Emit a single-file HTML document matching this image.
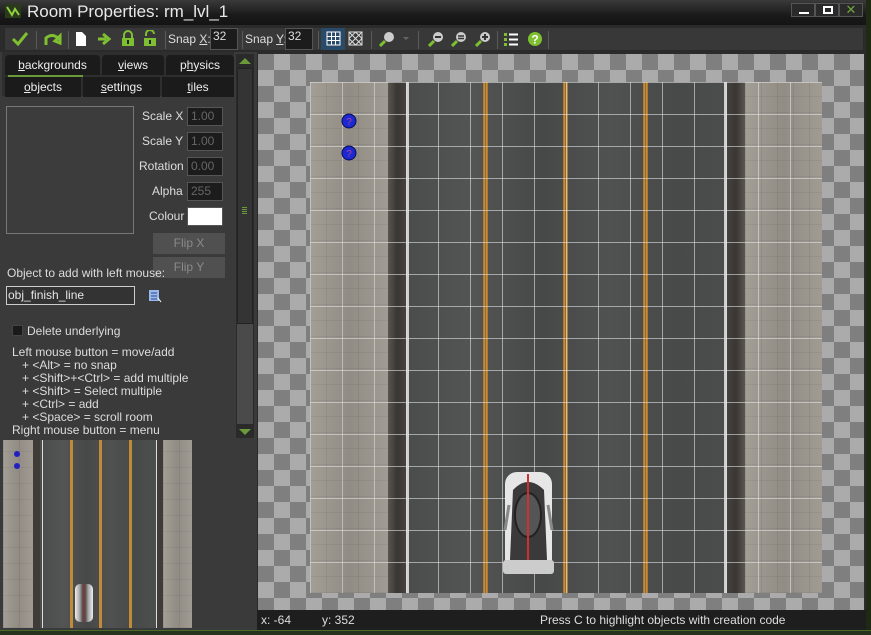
<!DOCTYPE html>
<html><head><meta charset="utf-8"><style>
*{margin:0;padding:0;box-sizing:border-box}
body{width:871px;height:635px;overflow:hidden;background:#2b2b2b;font-family:"Liberation Sans",sans-serif;color:#e6e6e6;position:relative}
.a{position:absolute}
.title{left:0;top:0;width:871px;height:25px;background:linear-gradient(#3a3a3a,#1a1a1a 60%,#141414)}
.tb{left:4px;top:27px;width:860px;height:24px;background:#383838;border:1px solid #2a2a2a}
.sep{position:absolute;top:3px;width:1px;height:18px;background:#5a5a5a}
.inp{position:absolute;background:#1c1c1c;border:1px solid #555;color:#ddd;font-size:12px;padding-left:2px}
.lbl{position:absolute;font-size:12px;color:#ddd}
.tab{position:absolute;background:#1b1b1b;font-size:12px;color:#eee;text-align:center;border-radius:4px 4px 0 0;line-height:20px}
.f{font-size:12px;color:#ddd;position:absolute}
.gi{position:absolute;background:#1c1c1c;border:1px solid #555;color:#666;font-size:12px;padding-left:3px;line-height:17px;width:36px;height:19px}
.btn{position:absolute;background:#505050;color:#8a8a8a;font-size:12px;text-align:center;line-height:21px;width:72px;height:21px}
.chk{background-color:#7f7f7f;background-image:linear-gradient(45deg,#ababab 25%,transparent 25%,transparent 75%,#ababab 75%),linear-gradient(45deg,#ababab 25%,transparent 25%,transparent 75%,#ababab 75%);background-size:32px 32px;background-position:0 0,16px 16px}
.sw{background:#9b968e;background-image:repeating-linear-gradient(90deg,rgba(0,0,0,.07) 0 1px,transparent 1px 16px),repeating-linear-gradient(0deg,rgba(0,0,0,.05) 0 1px,transparent 1px 16px),linear-gradient(90deg,#a39e96,#918c84,#a09b93)}
.road{background:linear-gradient(90deg,#4b4c4c,#535454 20%,#474848 40%,#505151 60%,#484949 80%,#4d4e4e)}
.grid{background-image:linear-gradient(90deg,rgba(225,225,225,.6) 1px,transparent 1px),linear-gradient(0deg,transparent 31px,rgba(225,225,225,.6) 31px);background-size:32px 32px}
.yl{position:absolute;top:0;bottom:0;width:5px;background:linear-gradient(90deg,#9a6a2a,#d89a3c 30%,#7a5a30 50%,#d89a3c 70%,#9a6a2a)}
</style></head><body>
<div class="a title"></div>
<svg class="a" style="left:5px;top:4px" width="16" height="14"><rect width="16" height="14" fill="#2c3a1c"/><path d="M2 3 L7 11 L10 5 L14 11" stroke="#8fd040" stroke-width="2" fill="none"/></svg>
<div class="a" style="left:27px;top:2px;font-size:17px;color:#e8e8e8">Room Properties: rm_lvl_1</div>
<div class="a" style="left:791px;top:3px;width:24px;height:14px;background:#2a2a2a;border:1px solid #555"><div class="a" style="left:7px;top:8px;width:10px;height:2px;background:#fff"></div></div>
<div class="a" style="left:815px;top:3px;width:24px;height:14px;background:#2a2a2a;border:1px solid #555"><div class="a" style="left:7px;top:2px;width:10px;height:8px;border:2px solid #fff"></div></div>
<div class="a" style="left:839px;top:3px;width:24px;height:14px;background:#2a2a2a;border:1px solid #555;color:#6ea83a;font-size:13px;text-align:center;line-height:12px">✕</div>
<div class="a" style="left:866px;top:0;width:5px;height:635px;background:#1e2a14"></div>

<div class="a tb">
<svg class="a" style="left:6px;top:3px" width="18" height="16"><path d="M2 8 L7 13 L16 2" stroke="#7fc030" stroke-width="3" fill="none"/></svg>
<div class="sep" style="left:31px"></div>
<svg class="a" style="left:37px;top:3px" width="20" height="16"><path d="M4 14 L4 7 Q10 2 16 7 L13 10 L18 12 L18 5 L16 7" stroke="#7fc030" stroke-width="3" fill="none"/></svg>
<div class="sep" style="left:63px"></div>
<svg class="a" style="left:70px;top:3px" width="12" height="16"><path d="M1 1 H7 L11 5 V15 H1Z" fill="#fff"/></svg>
<svg class="a" style="left:92px;top:5px" width="16" height="12"><path d="M1 6 H9 M6 1 L12 6 L6 11" stroke="#7fc030" stroke-width="3" fill="none"/></svg>
<svg class="a" style="left:116px;top:2px" width="14" height="17"><path d="M3 8 V5 A4 4 0 0 1 11 5 V8" stroke="#7fc030" stroke-width="2" fill="none"/><rect x="1" y="8" width="12" height="8" fill="#7fc030"/><rect x="6" y="10" width="2" height="4" fill="#223"/></svg>
<svg class="a" style="left:138px;top:2px" width="14" height="17"><path d="M3 6 V4 A4 4 0 0 1 11 4" stroke="#7fc030" stroke-width="2" fill="none"/><rect x="1" y="8" width="12" height="8" fill="#7fc030"/><rect x="6" y="10" width="2" height="4" fill="#223"/></svg>
<div class="sep" style="left:160px"></div>
<div class="lbl" style="left:163px;top:4px">Snap <u>X</u>:</div>
<div class="inp" style="left:205px;top:0;width:28px;height:22px">32</div>
<div class="sep" style="left:237px"></div>
<div class="lbl" style="left:240px;top:4px">Snap <u>Y</u>:</div>
<div class="inp" style="left:280px;top:0;width:28px;height:22px">32</div>
<div class="sep" style="left:313px"></div>
<div class="a" style="left:316px;top:0;width:24px;height:22px;background:#2a4a6a"></div>
<svg class="a" style="left:321px;top:3px" width="15" height="15"><path d="M1 1H14V14H1Z M5.5 1V14 M9.5 1V14 M1 5.5H14 M1 9.5H14" stroke="#fff" fill="none"/></svg>
<svg class="a" style="left:343px;top:3px" width="15" height="15"><path d="M1 1H14V14H1Z M1 1L14 14 M14 1L1 14 M1 7.5L7.5 1L14 7.5L7.5 14Z" stroke="#ddd" fill="none"/></svg>
<div class="sep" style="left:366px"></div>
<svg class="a" style="left:374px;top:3px" width="16" height="16"><circle cx="10" cy="6" r="5" fill="#ccc"/><path d="M6 10 L1 15" stroke="#7fc030" stroke-width="3"/></svg>
<div class="a" style="left:398px;top:9px;border:3px solid transparent;border-top-color:#666"></div>
<div class="sep" style="left:413px"></div>
<svg class="a" style="left:423px;top:3px" width="16" height="16"><circle cx="10" cy="6" r="5" fill="#ccc"/><path d="M7 6H13" stroke="#333" stroke-width="2"/><path d="M6 10 L1 15" stroke="#7fc030" stroke-width="3"/></svg>
<svg class="a" style="left:446px;top:3px" width="16" height="16"><circle cx="10" cy="6" r="5" fill="#ccc"/><path d="M7 5H13M7 7.5H13" stroke="#333" stroke-width="1.5"/><path d="M6 10 L1 15" stroke="#7fc030" stroke-width="3"/></svg>
<svg class="a" style="left:470px;top:3px" width="16" height="16"><circle cx="10" cy="6" r="5" fill="#ccc"/><path d="M7 6H13M10 3V9" stroke="#333" stroke-width="2"/><path d="M6 10 L1 15" stroke="#7fc030" stroke-width="3"/></svg>
<div class="sep" style="left:492px"></div>
<svg class="a" style="left:498px;top:3px" width="16" height="16"><rect x="1" y="2" width="3" height="3" fill="#7fc030"/><rect x="1" y="7" width="3" height="3" fill="#7fc030"/><rect x="1" y="12" width="3" height="3" fill="#7fc030"/><path d="M6 3.5H15M6 8.5H15M6 13.5H15" stroke="#fff" stroke-width="2"/></svg>
<svg class="a" style="left:522px;top:3px" width="16" height="16"><circle cx="8" cy="8" r="7" fill="#7fc030"/><text x="8" y="12.5" font-size="12" font-weight="bold" fill="#fff" text-anchor="middle" font-family="Liberation Sans">?</text></svg>
<div class="sep" style="left:543px"></div>
</div>

<!-- left panel -->
<div class="a" style="left:0;top:52px;width:257px;height:578px;background:#3a3a3a"></div>
<div class="a" style="left:2px;top:52px;width:232px;height:44px;background:#2e2e2e"></div>
<div class="tab" style="left:5px;top:55px;width:95px"><u>b</u>ackgrounds</div>
<div class="tab" style="left:102px;top:55px;width:62px"><u>v</u>iews</div>
<div class="tab" style="left:166px;top:55px;width:68px">p<u>h</u>ysics</div>
<div class="a" style="left:8px;top:75px;width:75px;height:2px;background:#6a9a3a"></div>
<div class="tab" style="left:5px;top:77px;width:76px;border-radius:0"><u>o</u>bjects</div>
<div class="tab" style="left:83px;top:77px;width:77px;border-radius:0"><u>s</u>ettings</div>
<div class="tab" style="left:162px;top:77px;width:72px;border-radius:0"><u>t</u>iles</div>

<div class="a" style="left:6px;top:106px;width:128px;height:128px;border:1px solid #777;background:#3c3c3c"></div>
<div class="f" style="left:142px;top:109px">Scale X</div><div class="gi" style="left:187px;top:107px">1.00</div>
<div class="f" style="left:142px;top:134px">Scale Y</div><div class="gi" style="left:187px;top:132px">1.00</div>
<div class="f" style="left:139px;top:159px">Rotation</div><div class="gi" style="left:187px;top:157px">0.00</div>
<div class="f" style="left:152px;top:184px">Alpha</div><div class="gi" style="left:187px;top:182px">255</div>
<div class="f" style="left:149px;top:209px">Colour</div><div class="a" style="left:187px;top:207px;width:36px;height:19px;background:#fff;border:1px solid #555"></div>
<div class="btn" style="left:153px;top:233px">Flip X</div>
<div class="btn" style="left:153px;top:257px">Flip Y</div>
<div class="f" style="left:7px;top:266px">Object to add with left mouse:</div>
<div class="a" style="left:6px;top:286px;width:129px;height:19px;border:1px solid #ccc;background:#333;font-size:12px;line-height:17px;padding-left:1px">obj_finish_line</div>
<svg class="a" style="left:148px;top:289px" width="14" height="14"><rect x="1" y="1" width="10" height="11" fill="#9ab8e8"/><path d="M3 4H9M3 7H9M3 10H9" stroke="#2a4a9a"/><path d="M10 9L13 13" stroke="#fff"/></svg>
<div class="a" style="left:12px;top:325px;width:11px;height:11px;background:#1a1a1a;border:1px solid #444"></div>
<div class="f" style="left:27px;top:324px">Delete underlying</div>
<div class="f" style="left:12px;top:346px;line-height:13px;white-space:pre">Left mouse button = move/add
   + &lt;Alt&gt; = no snap
   + &lt;Shift&gt;+&lt;Ctrl&gt; = add multiple
   + &lt;Shift&gt; = Select multiple
   + &lt;Ctrl&gt; = add
   + &lt;Space&gt; = scroll room
Right mouse button = menu</div>
<!-- scrollbar -->
<div class="a" style="left:236px;top:54px;width:18px;height:384px;background:#2a2a2a"></div>
<div class="a" style="left:239px;top:58px;border:6px solid transparent;border-bottom:6px solid #6a9a3a;border-top:0"></div>
<div class="a" style="left:237px;top:68px;width:16px;height:256px;background:#343434;border:1px solid #222"></div>
<div class="a" style="left:242px;top:207px;width:5px;height:7px;background:repeating-linear-gradient(#6a9a3a 0 1px,transparent 1px 2px)"></div>
<div class="a" style="left:237px;top:324px;width:16px;height:100px;background:#4a4a4a"></div>
<div class="a" style="left:239px;top:429px;border:6px solid transparent;border-top:6px solid #6a9a3a;border-bottom:0"></div>

<!-- minimap -->
<div class="a" style="left:3px;top:440px;width:189px;height:188px;overflow:hidden">
<div class="a sw" style="left:0;top:0;width:30px;height:188px"></div>
<div class="a" style="left:30px;top:0;width:7px;height:188px;background:#3e3b39"></div>
<div class="a road" style="left:37px;top:0;width:117px;height:188px"></div>
<div class="a" style="left:39px;top:0;width:1px;height:188px;background:#ddd"></div>
<div class="a" style="left:153px;top:0;width:1px;height:188px;background:#ddd"></div>
<div class="a" style="left:67px;top:0;width:3px;height:188px;background:#c08a38"></div>
<div class="a" style="left:96px;top:0;width:3px;height:188px;background:#c08a38"></div>
<div class="a" style="left:126px;top:0;width:3px;height:188px;background:#c08a38"></div>
<div class="a" style="left:154px;top:0;width:6px;height:188px;background:#3e3b39"></div>
<div class="a sw" style="left:160px;top:0;width:29px;height:188px"></div>
<div class="a" style="left:11px;top:11px;width:6px;height:6px;background:#2020c0;border-radius:50%"></div>
<div class="a" style="left:11px;top:23px;width:6px;height:6px;background:#2020c0;border-radius:50%"></div>
<div class="a" style="left:72px;top:144px;width:18px;height:38px;background:linear-gradient(90deg,#eee,#aaa 25%,#444 45%,#c03030 50%,#444 55%,#aaa 75%,#eee);border-radius:5px"></div>
</div>

<!-- canvas -->
<div class="a chk" style="left:258px;top:54px;width:606px;height:556px"></div>
<div class="a" style="left:310px;top:82px;width:512px;height:511px;overflow:hidden">
<div class="a sw" style="left:0;top:0;width:78px;height:511px"></div>
<div class="a" style="left:78px;top:0;width:18px;height:511px;background:linear-gradient(90deg,#5a5550,#3a3634 50%,#45413e)"></div>
<div class="a road" style="left:96px;top:0;width:340px;height:511px"></div>
<div class="a" style="left:96px;top:0;width:3px;height:511px;background:#d0d0d0"></div>
<div class="a" style="left:414px;top:0;width:3px;height:511px;background:#d0d0d0"></div>
<div class="yl" style="left:173px"></div>
<div class="yl" style="left:253px"></div>
<div class="yl" style="left:333px"></div>
<div class="a" style="left:417px;top:0;width:18px;height:511px;background:linear-gradient(90deg,#45413e,#3a3634 50%,#5a5550)"></div>
<div class="a sw" style="left:435px;top:0;width:77px;height:511px"></div>
<div class="a grid" style="left:0;top:0;width:512px;height:511px"></div>
<svg class="a" style="left:193px;top:388px" width="51" height="106"><rect x="2" y="2" width="47" height="102" rx="12" fill="#e6e6e6"/><path d="M10 20 Q25 4 41 20 L44 90 Q25 100 7 90Z" fill="#3a3a3a"/><ellipse cx="25" cy="45" rx="13" ry="22" fill="#555" stroke="#222" stroke-width="2"/><path d="M25 4 V100" stroke="#d03030" stroke-width="2"/><rect x="0" y="90" width="51" height="14" rx="3" fill="#ccc"/><path d="M6 35 L2 60 M45 35 L49 60" stroke="#888" stroke-width="3"/></svg>
<svg class="a" style="left:31px;top:31px" width="16" height="16"><circle cx="8" cy="8" r="7" fill="#1a2ad0" stroke="#0a0a50"/><text x="8" y="12" font-size="10" fill="#c040a0" text-anchor="middle" font-family="Liberation Sans">?</text></svg>
<svg class="a" style="left:31px;top:63px" width="16" height="16"><circle cx="8" cy="8" r="7" fill="#1a2ad0" stroke="#0a0a50"/><text x="8" y="12" font-size="10" fill="#c040a0" text-anchor="middle" font-family="Liberation Sans">?</text></svg>
</div>
<!-- status -->
<div class="a" style="left:257px;top:610px;width:609px;height:20px;background:#1e1e1e"></div>
<div class="f" style="left:261px;top:613px">x: -64</div>
<div class="f" style="left:322px;top:613px">y: 352</div>
<div class="f" style="left:540px;top:613px">Press C to highlight objects with creation code</div>
<div class="a" style="left:0;top:630px;width:871px;height:5px;background:#27331c;border-top:1px solid #4a6a2a"></div>
</body></html>
